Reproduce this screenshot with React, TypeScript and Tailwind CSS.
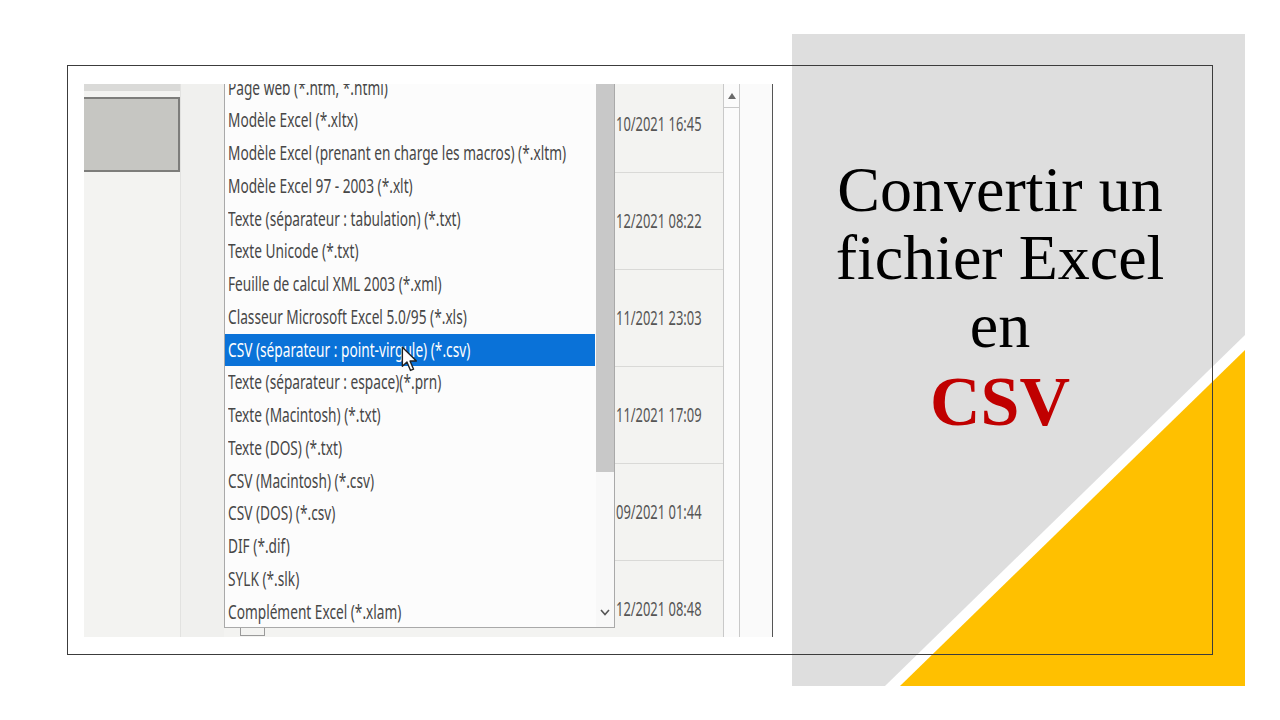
const formats = [
  'Page web (*.htm, *.html)',
  'Modèle Excel (*.xltx)',
  'Modèle Excel (prenant en charge les macros) (*.xltm)',
  'Modèle Excel 97 - 2003 (*.xlt)',
  'Texte (séparateur : tabulation) (*.txt)',
  'Texte Unicode (*.txt)',
  'Feuille de calcul XML 2003 (*.xml)',
  'Classeur Microsoft Excel 5.0/95 (*.xls)',
  'CSV (séparateur : point-virgule) (*.csv)',
  'Texte (séparateur : espace)(*.prn)',
  'Texte (Macintosh) (*.txt)',
  'Texte (DOS) (*.txt)',
  'CSV (Macintosh) (*.csv)',
  'CSV (DOS) (*.csv)',
  'DIF (*.dif)',
  'SYLK (*.slk)',
  'Complément Excel (*.xlam)',
]

const dates = ['10/2021 16:45', '12/2021 08:22', '11/2021 23:03', '11/2021 17:09', '09/2021 01:44', '12/2021 08:48']

const SELECTED = 8

function Cursor() {
  return (
    <svg width="18" height="28" viewBox="0 0 14 22" className="absolute left-[317px] top-[262px]">
      <path d="M1 1 L1 16 L4.6 12.6 L7.4 19.2 L9.8 18.2 L7 11.8 L12 11.8 Z" fill="#fff" stroke="#222" strokeWidth="1.1" strokeLinejoin="round" />
    </svg>
  )
}

function Screenshot() {
  return (
    <div className="relative mt-[84px] ml-[84px] flex w-[689px] h-[553px] shrink-0 overflow-hidden bg-[#f3f3f1] border-r border-[#555] font-['Noto_Sans',sans-serif]">
      {/* left navigation pane */}
      <div className="w-[96px] shrink-0 flex flex-col">
        <div className="h-[7px] bg-[#dadad8]" />
        <div className="mt-[6px] h-[75px] bg-[#c6c6c2] border-2 border-l-0 border-[#7d7d7b]" />
      </div>
      <div className="w-[44px] shrink-0 bg-[#f0f0ee] border-l border-[#e2e2e0]" />

      {/* save-as type dropdown */}
      <div className="w-[391px] shrink-0 flex flex-col">
        <div className="h-[544px] flex bg-[#fcfcfc] border border-t-0 border-[#a9a9a9]">
          <div className="w-[370px] overflow-hidden">
            <div className="-mt-[12.4px]">
              {formats.map((f, i) => (
                <div
                  key={f}
                  className={`h-[32.75px] flex items-center pl-[3px] text-[19px] whitespace-nowrap ${
                    i === SELECTED ? 'bg-[#0a72d8] text-white' : 'text-[#474747]'
                  }`}
                >
                  <span className="inline-block origin-left scale-x-[0.72]">{f}</span>
                </div>
              ))}
            </div>
          </div>
          <div className="ml-auto w-[18px] flex flex-col bg-[#f8f8f8]">
            <div className="h-[388px] bg-[#c8c8c8]" />
            <div className="mt-auto mb-[11px] flex justify-center">
              <svg width="10" height="7" viewBox="0 0 10 7">
                <polyline points="1,1 5,5.5 9,1" fill="none" stroke="#555" strokeWidth="1.6" />
              </svg>
            </div>
          </div>
        </div>
        <div className="ml-[16px] w-[25px] h-[8px] border border-t-0 border-[#9a9a9a]" />
      </div>

      {/* modified dates column */}
      <div className="w-[108px] shrink-0 flex flex-col">
        <div className="-mt-[8px]">
          {dates.map(d => (
            <div key={d} className="h-[97px] flex items-center border-b border-[#d9d9d7] pl-[1px] text-[19px] text-[#555] whitespace-nowrap">
              <span className="inline-block origin-left scale-x-[0.68]">{d}</span>
            </div>
          ))}
        </div>
      </div>

      {/* file list scrollbar */}
      <div className="w-[17px] shrink-0 bg-[#fbfbfb] border-x border-[#c9c9c9]">
        <div className="h-[24px] flex items-center justify-center border-b border-[#c9c9c9]">
          <svg width="8" height="6" viewBox="0 0 8 6">
            <polygon points="0,6 4,0 8,6" fill="#6a6a6a" />
          </svg>
        </div>
      </div>
      <div className="flex-1 bg-[#fafafa]" />

      <Cursor />
    </div>
  )
}

function TitlePanel() {
  return (
    <div className="relative mt-[34px] ml-[19px] w-[453px] h-[652px] shrink-0 bg-[#dedede]">
      <svg width="453" height="652" viewBox="0 0 453 652" className="absolute inset-0">
        <polygon points="93,652 453,301 453,652" fill="#fff" />
        <polygon points="108,652 453,316 453,652" fill="#ffc000" />
      </svg>
      <div className="relative pt-[122px] pr-[37px] text-center font-['Liberation_Serif',serif] text-black">
        <div className="text-[64px] leading-[68px]">Convertir un</div>
        <div className="text-[64px] leading-[68px]">fichier Excel</div>
        <div className="text-[64px] leading-[68px]">en</div>
        <div className="text-[70px] leading-[83px] font-bold text-[#c00000]">CSV</div>
      </div>
    </div>
  )
}

export default function App() {
  return (
    <div className="relative w-[1280px] h-[720px] overflow-hidden bg-white flex items-start">
      <Screenshot />
      <TitlePanel />
      <div className="absolute left-[67px] top-[65px] w-[1146px] h-[590px] border-[1.5px] border-[#3c3c3c] pointer-events-none" />
    </div>
  )
}
